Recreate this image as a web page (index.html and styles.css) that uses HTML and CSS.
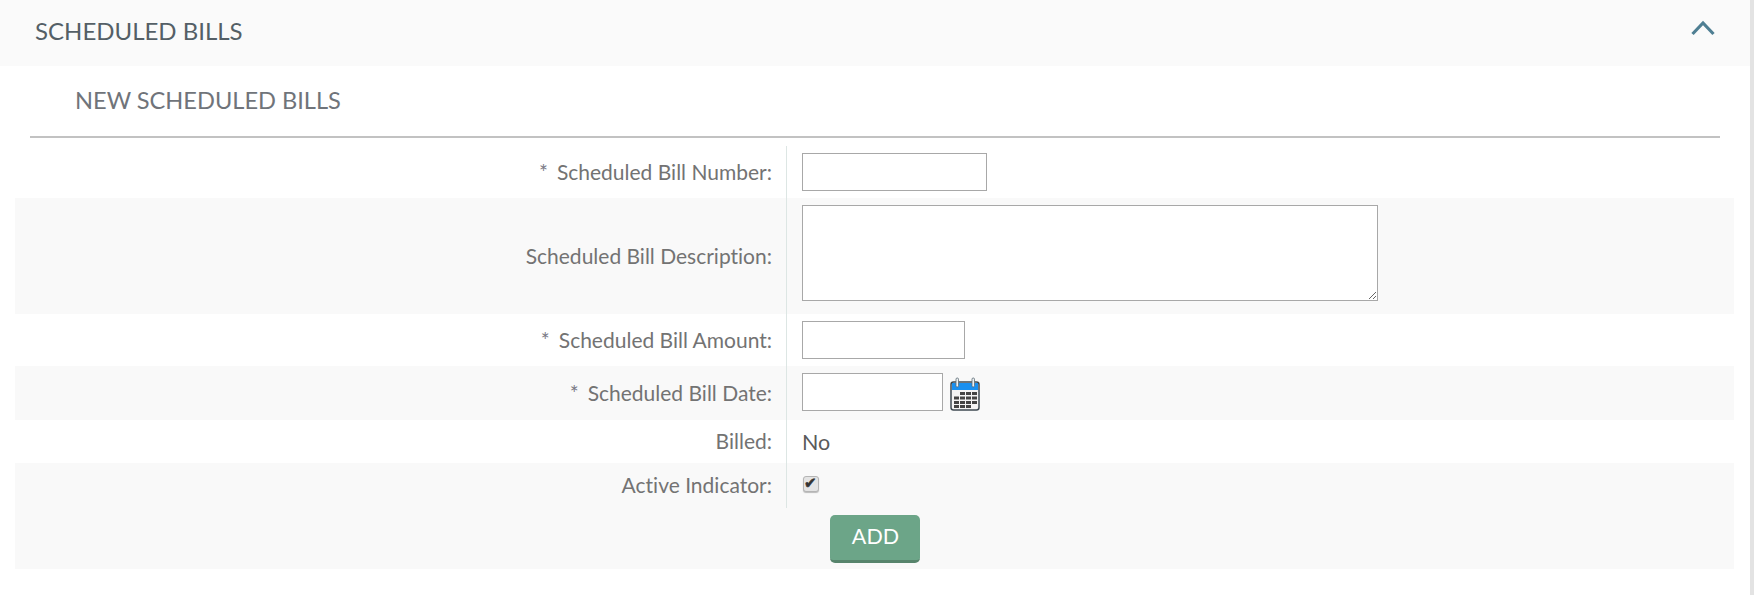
FILE: index.html
```html
<!DOCTYPE html>
<html lang="en">
<head>
    <meta charset="UTF-8">
    <title>Scheduled Bills</title>
    <link rel="stylesheet" href="styles.css">
</head>
<body>
    <div class="page">
        <div class="panel-head">
            <span class="panel-title">SCHEDULED BILLS</span>
            <svg class="chevron" width="24" height="16" viewBox="0 0 24 16">
                <path d="M1.5 14 L12 3 L22.5 14" fill="none" stroke="#4f7f93" stroke-width="3.2"/>
            </svg>
        </div>
        <h2 class="section-title">NEW SCHEDULED BILLS</h2>
        <div class="form">
            <div class="row">
                <label class="label"><span class="req">*</span>Scheduled Bill Number:</label>
                <div class="value"><input type="text" class="input input-number"></div>
            </div>
            <div class="row alt">
                <label class="label">Scheduled Bill Description:</label>
                <div class="value value-area"><textarea class="input input-area"></textarea></div>
            </div>
            <div class="row">
                <label class="label"><span class="req">*</span>Scheduled Bill Amount:</label>
                <div class="value"><input type="text" class="input input-amount"></div>
            </div>
            <div class="row alt">
                <label class="label"><span class="req">*</span>Scheduled Bill Date:</label>
                <div class="value value-date">
                    <input type="text" class="input input-date">
                    <svg class="calendar" width="30" height="34" viewBox="0 0 30 34">
                        <rect x="1" y="5" width="28" height="28" rx="2.5" fill="#f4f4f4" stroke="#3f4a52" stroke-width="1.5"/>
                        <rect x="2" y="6" width="26" height="7" fill="#1a90f0"/>
                        <rect x="6" y="1" width="2.5" height="9" rx="1.2" fill="#eef2f4" stroke="#5b6a74" stroke-width="0.8"/>
                        <rect x="22" y="1" width="2.5" height="9" rx="1.2" fill="#eef2f4" stroke="#5b6a74" stroke-width="0.8"/>
                        <g fill="#444">
                            <rect x="10" y="15" width="5" height="3"/><rect x="16" y="15" width="5" height="3"/><rect x="22" y="15" width="5" height="3"/>
                            <rect x="4" y="19.5" width="5" height="3"/><rect x="10" y="19.5" width="5" height="3"/><rect x="16" y="19.5" width="5" height="3"/><rect x="22" y="19.5" width="5" height="3"/>
                            <rect x="4" y="24" width="5" height="3"/><rect x="10" y="24" width="5" height="3"/><rect x="16" y="24" width="5" height="3"/><rect x="22" y="24" width="5" height="3"/>
                            <rect x="4" y="28" width="5" height="3"/><rect x="10" y="28" width="5" height="3"/><rect x="16" y="28" width="5" height="3"/>
                        </g>
                    </svg>
                </div>
            </div>
            <div class="row row-billed">
                <label class="label">Billed:</label>
                <div class="value value-text">No</div>
            </div>
            <div class="row alt row-active">
                <label class="label">Active Indicator:</label>
                <div class="value value-check"><input type="checkbox" class="check" checked></div>
            </div>
            <div class="actions">
                <button class="btn-add">ADD</button>
            </div>
        </div>
    </div>
    <div class="scroll-strip"></div>
</body>
</html>
```

FILE: styles.css
```css
* {
    box-sizing: border-box;
}
html, body {
    height: 100%;
}
body {
    margin: 0;
    display: flex;
    background: #ffffff;
    font-family: Lato, "Open Sans", sans-serif;
    font-variant-ligatures: none;
    color: #737373;
    overflow: hidden;
}
.page {
    flex: 1;
}
.scroll-strip {
    width: 4px;
    background: #e3e3e3;
}
.panel-head {
    height: 66px;
    padding: 0 35px 5px 35px;
    background: #fafafa;
    display: flex;
    align-items: center;
    justify-content: space-between;
}
.panel-title {
    font-size: 24px;
    color: #545f66;
}
.chevron {
    margin-top: -6px;
}
.section-title {
    margin: 0 30px 0 30px;
    height: 72px;
    padding: 20px 0 0 45px;
    border-bottom: 2px solid #c2c2c2;
    font-size: 23.6px;
    font-weight: 400;
    color: #70747a;
}
.form {
    margin: 8px 16px 0 15px;
}
.row {
    display: flex;
}
.alt {
    background: #f9f9f9;
}
.label {
    width: 771px;
    padding: 0 14px 2px 0;
    display: flex;
    align-items: center;
    justify-content: flex-end;
    font-size: 21px;
}
.req {
    margin-right: 9px;
    color: #7a7a86;
}
.value {
    flex: 1;
    padding: 7px 0 7px 15px;
    border-left: 1px solid #dde6e4;
}
.value-area {
    padding-bottom: 13px;
}
.value-date {
    display: flex;
    align-items: flex-start;
    gap: 7px;
    padding-bottom: 9px;
}
.value-text {
    display: flex;
    align-items: center;
    font-size: 21.5px;
    color: #5a5a5a;
}
.row-billed {
    height: 43px;
}
.row-active {
    height: 45px;
}
.value-check {
    padding-top: 13px;
}
.input {
    display: block;
    height: 38px;
    border: 1px solid #a8a8a8;
    background: #ffffff;
    border-radius: 0;
    padding: 4px;
    outline: none;
}
.input-number {
    width: 185px;
}
.input-area {
    width: 576px;
    height: 96px;
}
.input-amount {
    width: 163px;
}
.input-date {
    width: 141px;
}
.calendar {
    margin-top: 4px;
}
.check {
    appearance: none;
    display: block;
    width: 16px;
    height: 16px;
    margin: 0 0 0 1px;
    border: 1px solid #b5b5b5;
    border-radius: 3px;
    background: #e4e4e4;
    box-shadow: 0 1px 1px rgba(0, 0, 0, 0.25);
    position: relative;
}
.check:checked::after {
    content: "\2714";
    position: absolute;
    left: 0;
    top: -3px;
    font: 15px "DejaVu Sans", sans-serif;
    -webkit-text-stroke: 0.6px #333333;
    color: #333333;
}
.actions {
    height: 61px;
    padding-top: 7px;
    background: #f9f9f9;
    text-align: center;
}
.btn-add {
    width: 90px;
    height: 48px;
    padding: 0 0 3px 2px;
    border: none;
    border-bottom: 3px solid #57846c;
    border-radius: 5px;
    background: #6ca588;
    color: #ffffff;
    font-family: Lato, sans-serif;
    font-size: 21.5px;
}
```
